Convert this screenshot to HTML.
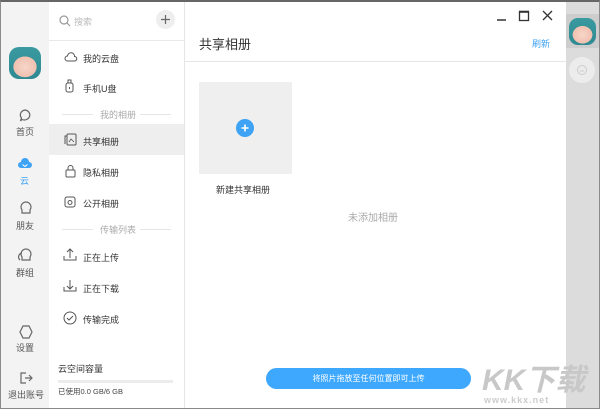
<!DOCTYPE html><html><head><meta charset="utf-8"><style>
*{margin:0;padding:0;box-sizing:border-box}
body{width:600px;height:409px;overflow:hidden;font-family:"Liberation Sans","Noto Sans CJK SC",sans-serif;font-size:9px;color:#333;background:#fff;position:relative}
.a{position:absolute}
.frame{left:0;top:0;width:600px;height:409px;border:1px solid #8a8a8a;border-top:2px solid #666}
.t{position:absolute;white-space:nowrap}
svg{position:absolute;overflow:visible}
.av{background:radial-gradient(ellipse 45% 40% at 50% 62%,#f6d6c8 0,#f0c0b0 80%,transparent 82%),linear-gradient(#3a9aa0,#2f8a92)}
</style></head><body>
<div class="a" style="left:1px;top:0;width:48px;height:409px;background:#f3f3f3"></div>
<div class="a" style="left:184px;top:0;width:1px;height:409px;background:#e6e6e6"></div>
<div class="a" style="left:49px;top:40px;width:135px;height:1px;background:#e8e8e8"></div>
<div class="a" style="left:185px;top:61px;width:381px;height:1px;background:#e6e6e6"></div>
<div class="a" style="left:566px;top:0;width:34px;height:409px;background:#dcdcdc"></div>
<div class="a" style="left:566px;top:14px;width:33px;height:34px;background:#cdcdcd"></div>
<div class="a" style="left:569px;top:57px;width:26px;height:26px;border-radius:50%;background:#ececec"></div>
<svg style="left:577px;top:65px" width="10" height="10"><circle cx="5" cy="5" r="4.5" fill="none" stroke="#ccc"/><path d="M3 6h4" stroke="#ccc"/></svg>
<div class="a av" style="left:9px;top:47px;width:32px;height:32px;border-radius:10px"></div>
<div class="a av" style="left:569px;top:18px;width:27px;height:27px;border-radius:9px"></div>
<svg style="left:19px;top:109px" width="14" height="14"><path d="M6 1a5.5 5 0 1 1-3 9.5L1.5 12l1-3A5.5 5 0 0 1 6 1z" fill="none" stroke="#666" stroke-width="1.2"/></svg>
<div class="t" style="left:16px;top:125px;color:#555">首页</div>
<svg style="left:18px;top:157px" width="14" height="12"><path d="M3 11a3 3 0 0 1 0-6 4 4 0 0 1 8 0 3 3 0 0 1 0 6z" fill="#3ea2f5"/><path d="M4.5 7.5l2.5 2 2.5-2" stroke="#fff" fill="none"/></svg>
<div class="t" style="left:20px;top:174px;color:#3ea2f5">云</div>
<svg style="left:19px;top:201px" width="14" height="14"><path d="M3 12V9a5 5 0 1 1 8 0v3z" fill="none" stroke="#666" stroke-width="1.2"/></svg>
<div class="t" style="left:16px;top:219px;color:#555">朋友</div>
<svg style="left:17px;top:248px" width="16" height="14"><path d="M5 12V9a5 5 0 1 1 8 0v3zM5 5a4 4 0 0 0-2 7" fill="none" stroke="#666" stroke-width="1.2"/></svg>
<div class="t" style="left:16px;top:266px;color:#555">群组</div>
<svg style="left:19px;top:325px" width="14" height="14"><path d="M4 1h6l3 6-3 6H4L1 7z" fill="none" stroke="#666" stroke-width="1.2"/></svg>
<div class="t" style="left:16px;top:341px;color:#555">设置</div>
<svg style="left:19px;top:371px" width="14" height="14"><path d="M7 2H2v10h5M6 7h7M10 4l3 3-3 3" fill="none" stroke="#666" stroke-width="1.2"/></svg>
<div class="t" style="left:8px;top:388px;color:#555">退出账号</div>
<svg style="left:59px;top:15px" width="12" height="12"><circle cx="5" cy="5" r="4" fill="none" stroke="#999" stroke-width="1.2"/><path d="M8 8l3 3" stroke="#999" stroke-width="1.2"/></svg>
<div class="t" style="left:74px;top:15px;color:#bbb">搜索</div>
<div class="a" style="left:156px;top:10px;width:19px;height:19px;border-radius:50%;background:#eee"></div>
<svg style="left:160px;top:14px" width="11" height="11"><path d="M5.5 1v9M1 5.5h9" stroke="#666" stroke-width="1.2"/></svg>
<div class="a" style="left:49px;top:124px;width:135px;height:31px;background:#eeeeee"></div>
<svg style="left:64px;top:52px" width="14" height="10"><path d="M3.5 9a2.5 2.5 0 0 1 0-5 3.5 3.5 0 0 1 7 0.5 2.2 2.2 0 0 1 0 4.5z" fill="none" stroke="#555"/></svg>
<div class="t" style="left:83px;top:52px">我的云盘</div>
<svg style="left:65px;top:79px" width="10" height="14"><rect x="1" y="4" width="7" height="9" rx="2" fill="none" stroke="#555"/><path d="M3 4V1h3v3M4.5 8v2" stroke="#555" fill="none"/></svg>
<div class="t" style="left:83px;top:82px">手机U盘</div>
<div class="a" style="left:62px;top:114px;width:31px;height:1px;background:#e6e6e6"></div>
<div class="a" style="left:140px;top:114px;width:31px;height:1px;background:#e6e6e6"></div>
<div class="t" style="left:100px;top:108px;color:#aaa">我的相册</div>
<svg style="left:64px;top:133px" width="13" height="13"><rect x="3" y="1" width="9" height="11" rx="1" fill="none" stroke="#555"/><path d="M3 3H1v8" fill="none" stroke="#555"/><path d="M5 9l2-3 3 3" fill="none" stroke="#555" stroke-width=".8"/></svg>
<div class="t" style="left:83px;top:135px">共享相册</div>
<svg style="left:65px;top:164px" width="11" height="14"><rect x="1" y="6" width="9" height="7" rx="1" fill="none" stroke="#555"/><path d="M3 6V4a2.5 2.5 0 0 1 5 0v2" fill="none" stroke="#555"/></svg>
<div class="t" style="left:83px;top:166px">隐私相册</div>
<svg style="left:64px;top:196px" width="12" height="12"><rect x="1" y="1" width="10" height="10" rx="2" fill="none" stroke="#555"/><circle cx="6" cy="6.5" r="2" fill="none" stroke="#555"/></svg>
<div class="t" style="left:83px;top:197px">公开相册</div>
<div class="a" style="left:62px;top:229px;width:31px;height:1px;background:#e6e6e6"></div>
<div class="a" style="left:140px;top:229px;width:31px;height:1px;background:#e6e6e6"></div>
<div class="t" style="left:100px;top:223px;color:#aaa">传输列表</div>
<svg style="left:63px;top:248px" width="14" height="13"><path d="M1 8v4h12V8M7 10V1M4 4l3-3 3 3" fill="none" stroke="#555"/></svg>
<div class="t" style="left:83px;top:251px">正在上传</div>
<svg style="left:63px;top:279px" width="14" height="13"><path d="M1 8v4h12V8M7 1v9M4 7l3 3 3-3" fill="none" stroke="#555"/></svg>
<div class="t" style="left:83px;top:282px">正在下载</div>
<svg style="left:63px;top:311px" width="14" height="14"><circle cx="7" cy="7" r="6" fill="none" stroke="#555"/><path d="M4 7l2 2 4-4" fill="none" stroke="#555"/></svg>
<div class="t" style="left:83px;top:313px">传输完成</div>
<div class="t" style="left:58px;top:362px;font-size:9px">云空间容量</div>
<div class="a" style="left:58px;top:380px;width:115px;height:3px;background:#ececec"></div>
<div class="t" style="left:58px;top:386px;font-size:7.5px;color:#444">已使用0.0 GB/6 GB</div>
<svg style="left:493px;top:10px" width="66" height="12"><path d="M4 10h9" stroke="#333" stroke-width="1.5"/><rect x="26.5" y="1.5" width="9" height="9" fill="none" stroke="#333" stroke-width="1.3"/><path d="M26 1.8h10" stroke="#333" stroke-width="2"/><path d="M50 1l9 9M59 1l-9 9" stroke="#333" stroke-width="1.3"/></svg>
<div class="t" style="left:199px;top:34px;font-size:13px;color:#333">共享相册</div>
<div class="t" style="left:532px;top:37px;color:#3ea2f5">刷新</div>
<div class="a" style="left:199px;top:82px;width:93px;height:92px;background:#efefef"></div>
<div class="a" style="left:236px;top:119px;width:18px;height:18px;border-radius:50%;background:#3ea2f5"></div>
<svg style="left:240px;top:123px" width="10" height="10"><path d="M5 1.5v7M1.5 5h7" stroke="#fff" stroke-width="1.6"/></svg>
<div class="t" style="left:216px;top:183px;color:#333">新建共享相册</div>
<div class="t" style="left:348px;top:209px;font-size:10px;color:#aaa">未添加相册</div>
<div class="a" style="left:266px;top:368px;width:205px;height:21px;border-radius:11px;background:#3ea8ff"></div>
<div class="t" style="left:266px;top:373px;width:205px;text-align:center;color:#fff;font-size:8px">将照片拖放至任何位置即可上传</div>
<div class="t" style="left:482px;top:355px;font-size:30px;color:#c8c8c8;font-style:italic;font-weight:bold">KK下载</div>
<div class="t" style="left:484px;top:395px;font-size:9px;color:#ccc;font-weight:bold;letter-spacing:1px">www.kkx.net</div>
<div class="a frame"></div>
</body></html>
